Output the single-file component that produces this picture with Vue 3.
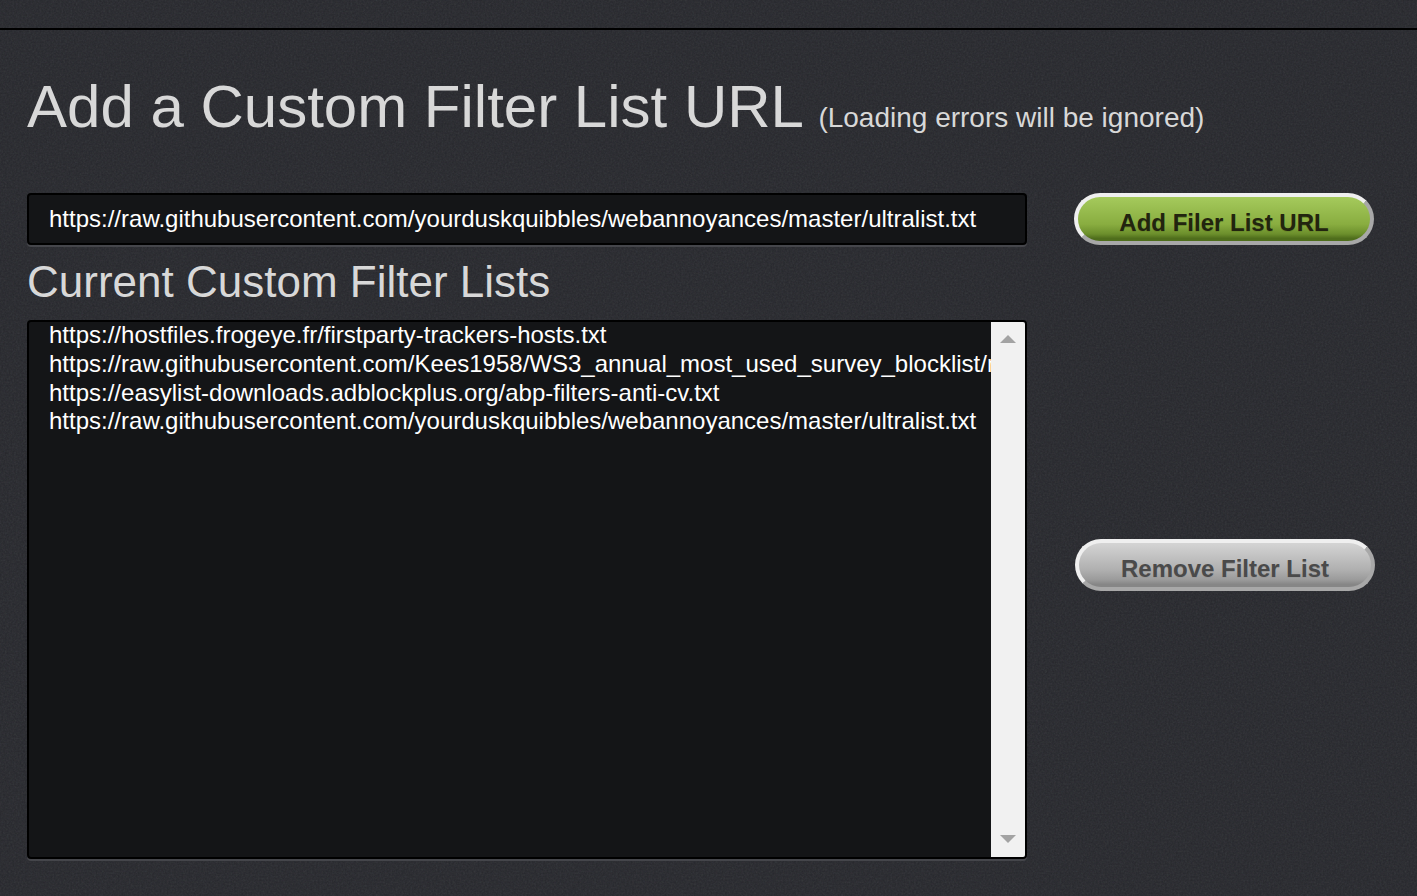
<template>
  <div class="page">
    <svg class="noise" width="1417" height="896" aria-hidden="true">
      <filter id="grain">
        <feTurbulence type="fractalNoise" baseFrequency="0.55" numOctaves="3" seed="4" />
        <feColorMatrix type="saturate" values="0.5" />
      </filter>
      <rect width="1417" height="896" filter="url(#grain)" />
    </svg>
    <div class="top-line"></div>
    <main class="content">
      <h1 class="title">Add a Custom Filter List URL <small>(Loading errors will be ignored)</small></h1>
      <div class="columns">
        <div class="left">
          <input class="url-input" type="text" :value="newUrl" />
          <h2 class="subtitle">Current Custom Filter Lists</h2>
          <div class="listbox">
            <div class="options">
              <div v-for="url in lists" :key="url" class="option">{{ url }}</div>
            </div>
            <div class="scrollbar">
              <span class="arrow up"></span>
              <span class="arrow down"></span>
            </div>
          </div>
        </div>
        <div class="right">
          <button class="btn green">Add Filer List URL</button>
          <button class="btn grey">Remove Filter List</button>
        </div>
      </div>
    </main>
  </div>
</template>

<script setup>
const newUrl = 'https://raw.githubusercontent.com/yourduskquibbles/webannoyances/master/ultralist.txt'

const lists = [
  'https://hostfiles.frogeye.fr/firstparty-trackers-hosts.txt',
  'https://raw.githubusercontent.com/Kees1958/WS3_annual_most_used_survey_blocklist/master/w3tech_hostfile.txt',
  'https://easylist-downloads.adblockplus.org/abp-filters-anti-cv.txt',
  newUrl
]
</script>

<style>
html, body {
  margin: 0;
  background: #26272c;
  overflow: hidden;
}
</style>

<style scoped>
.page {
  position: relative;
  width: 1417px;
  height: 896px;
  overflow: hidden;
  background: #26272c;
  font-family: "Liberation Sans", Arial, sans-serif;
}

.noise {
  position: absolute;
  inset: 0;
  opacity: 0.1;
  pointer-events: none;
}

.top-line {
  position: relative;
  margin-top: 28px;
  height: 2px;
  background: #000;
}

.content {
  position: relative;
  padding: 0 0 0 27px;
}

.title {
  margin: 41px 0 0;
  height: 70px;
  font-size: 60px;
  line-height: 71px;
  font-weight: 400;
  color: #d8d8d8;
  white-space: nowrap;
}

.title small {
  font-size: 28px;
  color: #d8d8d8;
}

.columns {
  display: flex;
  margin-top: 52px;
}

.left {
  width: 1000px;
}

.url-input {
  display: block;
  box-sizing: border-box;
  width: 100%;
  height: 52px;
  padding: 0 0 0 20px;
  border: 2px solid #000;
  border-radius: 4px;
  background: #141517;
  box-shadow: 0 2px 0 #45464b;
  color: #fff;
  font-family: inherit;
  font-size: 24px;
  outline: none;
}

.subtitle {
  margin: 12px 0 13px;
  height: 50px;
  font-size: 44px;
  line-height: 50px;
  font-weight: 400;
  color: #d8d8d8;
}

.listbox {
  display: flex;
  box-sizing: border-box;
  height: 539px;
  border: 2px solid #000;
  border-radius: 4px;
  background: #141517;
  box-shadow: 0 2px 0 #45464b;
  overflow: hidden;
}

.options {
  flex: 1;
  min-width: 0;
  overflow: hidden;
  margin-top: -0.6px;
  padding-left: 20px;
}

.option {
  height: 28.7px;
  line-height: 28px;
  font-size: 24px;
  color: #fff;
  white-space: nowrap;
}

.scrollbar {
  display: flex;
  flex-direction: column;
  justify-content: space-between;
  align-items: center;
  box-sizing: border-box;
  width: 34px;
  padding: 13px 0 14px;
  background: #f1f1f1;
}

.arrow {
  width: 0;
  height: 0;
  border-left: 8px solid transparent;
  border-right: 8px solid transparent;
}

.arrow.up {
  border-bottom: 8px solid #a3a3a3;
}

.arrow.down {
  border-top: 8px solid #a3a3a3;
}

.right {
  position: relative;
  width: 300px;
  margin-left: 47px;
  display: flex;
  flex-direction: column;
  gap: 294px;
}

.btn {
  box-sizing: border-box;
  width: 300px;
  height: 52px;
  padding: 8px 0 0;
  border: 4px solid;
  border-radius: 26px;
  font-family: inherit;
  font-size: 24px;
  font-weight: 700;
}

.green {
  border-color: #efefef #a8a8a8 #a8a8a8 #efefef;
  background: linear-gradient(#a5ca5c, #89ad40 62%, #6c8f2c 84%, #4f6e1c 94%);
  color: #22240f;
  text-shadow: 0 1px 0 #6b8c2a;
}

.grey {
  margin-left: 1px;
  border-color: #efefef #a8a8a8 #a8a8a8 #efefef;
  background: linear-gradient(#d4d4d4, #afafaf 62%, #9a9a9a 84%, #868686 94%);
  color: #4a4a4a;
  text-shadow: 0 1px 0 #999;
}
</style>
